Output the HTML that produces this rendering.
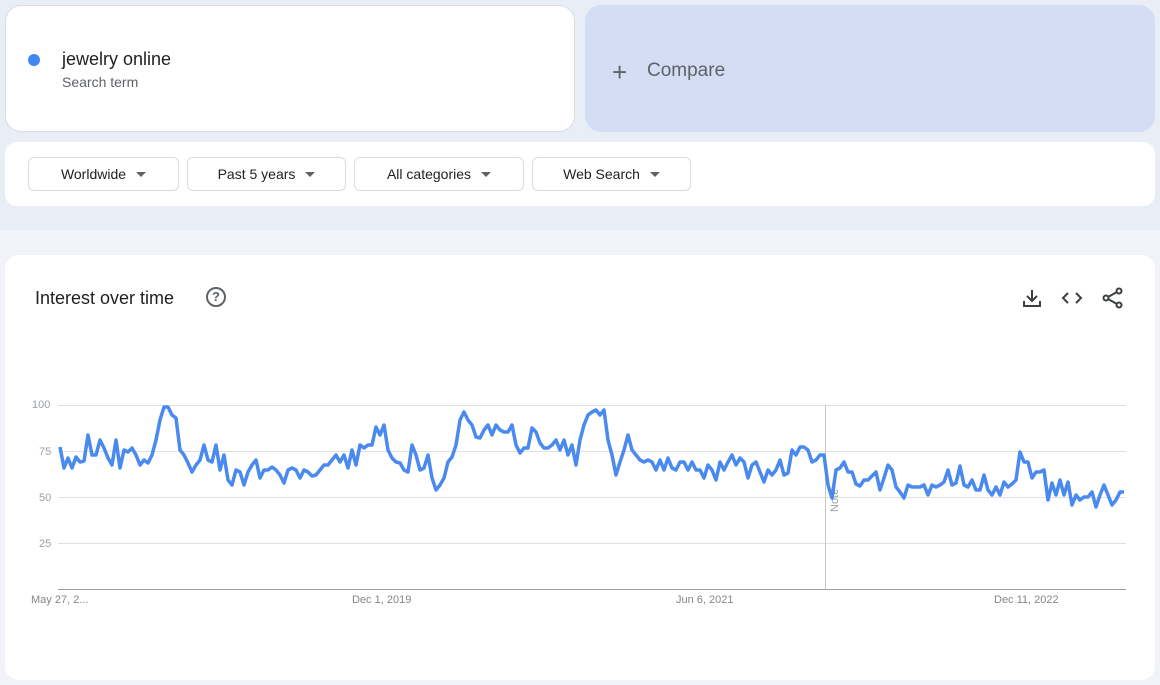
<!DOCTYPE html>
<html><head><meta charset="utf-8"><style>
*{box-sizing:border-box;margin:0;padding:0}
body{width:1160px;height:685px;background:#f1f3f8;font-family:"Liberation Sans",Arial,sans-serif;position:relative;overflow:hidden}
.top{position:absolute;left:0;top:0;width:1160px;height:230px;background:#e9edf6}
.card{position:absolute;background:#fff;border-radius:16px}
.btn{position:absolute;top:157px;height:34px;border:1px solid #dadce0;border-radius:6px;background:#fff;font-size:14px;color:#202124;display:flex;align-items:center;justify-content:center;gap:10px}
.tri{width:0;height:0;border-left:5px solid transparent;border-right:5px solid transparent;border-top:5px solid #5f6368}
.yl{position:absolute;left:32px;font-size:11px;color:#9aa0a6}
.xl{position:absolute;top:594px;font-size:11px;color:#80868b}
</style></head><body>
<div class="top"></div>
<div class="card" style="left:5px;top:5px;width:570px;height:127px;border:1px solid #dadce0"></div>
<div style="position:absolute;left:28px;top:54px;width:12px;height:12px;border-radius:50%;background:#4285f4"></div>
<div style="position:absolute;left:62px;top:49px;font-size:18px;color:#202124">jewelry online</div>
<div style="position:absolute;left:62px;top:74px;font-size:14px;color:#5f6368">Search term</div>
<div class="card" style="left:585px;top:5px;width:570px;height:127px;background:#d3def5"></div>
<div style="position:absolute;left:612px;top:57px;font-size:26px;color:#5f6368;font-weight:300">+</div>
<div style="position:absolute;left:647px;top:60px;font-size:19px;color:#5f6368">Compare</div>
<div class="card" style="left:5px;top:142px;width:1150px;height:64px;border-radius:12px"></div>
<div class="btn" style="left:28px;width:151px">Worldwide<span class="tri"></span></div>
<div class="btn" style="left:187px;width:159px">Past 5 years<span class="tri"></span></div>
<div class="btn" style="left:354px;width:170px">All categories<span class="tri"></span></div>
<div class="btn" style="left:532px;width:159px">Web Search<span class="tri"></span></div>
<div class="card" style="left:5px;top:255px;width:1150px;height:425px;border-radius:14px"></div>
<div style="position:absolute;left:35px;top:288px;font-size:18px;color:#202124">Interest over time</div>
<div style="position:absolute;left:206px;top:287px;width:20px;height:20px;border:2px solid #5f6368;border-radius:50%;font-size:13px;color:#5f6368;text-align:center;line-height:16px;font-weight:bold">?</div>
<svg style="position:absolute;left:1020px;top:287px" width="110" height="24" fill="none" stroke="#3c4043" stroke-width="2">
<path d="M12 3v10M7 9l5 5 5-5M4 14v5h16v-5"/>
<path d="M48 6l-5 5 5 5M56 6l5 5-5 5"/>
<circle cx="99" cy="4" r="2.5"/><circle cx="86" cy="11" r="2.5"/><circle cx="99" cy="18" r="2.5"/><path d="M88 10l9-5M88 12l9 5"/>
</svg>
<div class="yl" style="top:399px">100</div><div class="yl" style="top:446px;left:39px">75</div><div class="yl" style="top:492px;left:39px">50</div><div class="yl" style="top:538px;left:39px">25</div>
<svg style="position:absolute;left:0;top:0" width="1160" height="685">
<g stroke="#e0e0e0" stroke-width="1"><path d="M58 405.5H1126M58 451.5H1126M58 497.5H1126M58 543.5H1126"/></g>
<path d="M58 589.5H1126" stroke="#9e9e9e"/>
<path d="M825.5 405V589" stroke="#c8c8c8"/>
<text x="838" y="512" transform="rotate(-90 838 512)" font-size="11" fill="#9aa0a6" font-family="Liberation Sans">Note</text>
<polyline fill="none" stroke="#4a8af0" stroke-width="3.5" stroke-linejoin="round" points="60,447 64,468 68,458 72,468 76,457 80,462 84,461 88,435 92,455 96,455 100,440 104,448 108,458 112,465 116,440 120,468 124,450 128,452 132,448 136,455 140,465 144,460 148,463 152,455 156,440 160,420 164,407 168,407 172,415 176,418 180,450 184,455 188,463 192,472 196,465 200,460 204,445 208,460 212,462 216,445 220,470 224,455 228,480 232,485 236,470 240,472 244,485 248,472 252,465 256,460 260,478 264,470 268,470 272,467 276,470 280,475 284,483 288,470 292,468 296,470 300,478 304,470 308,472 312,476 316,475 320,470 324,465 328,465 332,460 336,455 340,462 344,455 348,468 352,450 356,465 360,445 364,448 368,445 372,445 376,427 380,435 384,425 388,450 392,458 396,462 400,463 404,470 408,472 412,445 416,455 420,470 424,468 428,455 432,478 436,490 440,485 444,478 448,462 452,457 456,445 460,420 464,412 468,420 472,425 476,437 480,438 484,430 488,425 492,435 496,425 500,430 504,432 508,432 512,425 516,445 520,453 524,448 528,448 532,428 536,432 540,443 544,448 548,448 552,445 556,440 560,450 564,440 568,455 572,445 576,465 580,440 584,425 588,415 592,412 596,410 600,415 604,410 608,440 612,455 616,475 620,462 624,450 628,435 632,450 636,455 640,460 644,462 648,460 652,462 656,470 660,460 664,470 668,458 672,468 676,470 680,462 684,462 688,470 692,462 696,470 700,470 704,478 708,465 712,470 716,480 720,462 724,470 728,462 732,455 736,465 740,458 744,462 748,478 752,465 756,462 760,472 764,482 768,470 772,475 776,470 780,460 784,475 788,473 792,450 796,455 800,447 804,447 808,450 812,462 816,460 820,455 824,455 828,485 832,498 836,470 840,468 844,462 848,472 852,472 856,484 860,486 864,480 868,480 872,476 876,472 880,490 884,478 888,465 892,470 896,487 900,492 904,498 908,485 912,487 916,487 920,487 924,485 928,495 932,485 936,487 940,485 944,482 948,470 952,485 956,483 960,466 964,485 968,487 972,480 976,490 980,490 984,475 988,490 992,495 996,487 1000,495 1004,482 1008,487 1012,484 1016,480 1020,452 1024,462 1028,462 1032,478 1036,472 1040,472 1044,470 1048,500 1052,483 1056,495 1060,480 1064,495 1068,482 1072,505 1076,495 1080,500 1084,497 1088,497 1092,492 1096,507 1100,495 1104,485 1108,495 1112,505 1116,500 1120,492 1124,492"/>
</svg>
<div class="xl" style="left:31px">May 27, 2...</div>
<div class="xl" style="left:352px">Dec 1, 2019</div>
<div class="xl" style="left:676px">Jun 6, 2021</div>
<div class="xl" style="left:994px">Dec 11, 2022</div>
</body></html>
